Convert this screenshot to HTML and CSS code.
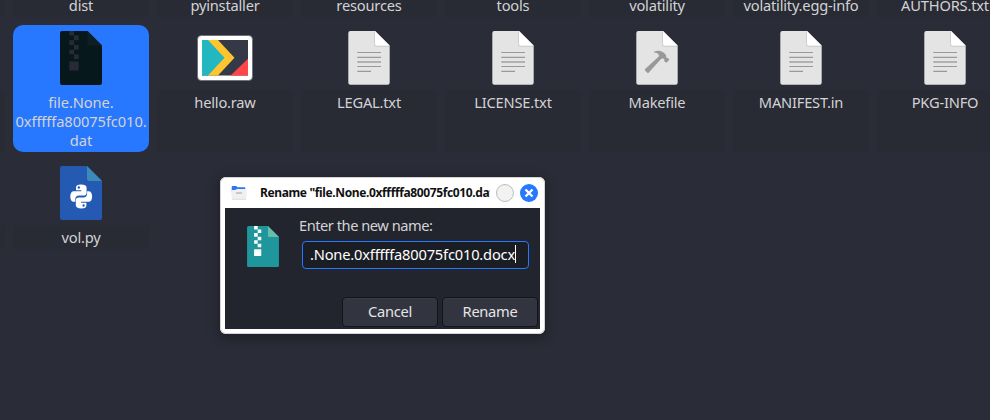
FILE: index.html
```html
<!DOCTYPE html>
<html lang="en">
<head>
<meta charset="utf-8">
<title>File Manager</title>
<link rel="stylesheet" href="styles.css">
</head>
<body>
<svg class="defs" aria-hidden="true">
  <symbol id="page" viewBox="0 0 44 56">
    <path d="M3 1.3h25L42.8 16v37a2 2 0 0 1-2 2H3a2 2 0 0 1-2-2V3.3a2 2 0 0 1 2-2z" fill="#1b1d24" opacity=".5"/>
    <path d="M3.3 1H28L42.7 15.6v37.1a2 2 0 0 1-2 2H3.3a2 2 0 0 1-2-2V3a2 2 0 0 1 2-2z" fill="#e4e4e4"/>
    <path d="M27.500 2v12.500a2 2 0 0 0 2 2H42" fill="none" stroke="#cfcfcf"/>
    <path d="M28 1l14.500 14.500H30a2 2 0 0 1-2-2z" fill="#fff"/>
  </symbol>
  <symbol id="text" viewBox="0 0 44 56">
    <use href="#page" width="44" height="56"/>
    <path d="M10.300 22.500h23.700M10.300 27.400h23.700M10.300 36.500h23.700M10.300 41.300h13.700" stroke="#999" stroke-width="1.200"/>
    <path d="M10.300 32h23.700" stroke="#b2b2b2" stroke-width="2"/>
  </symbol>
  <symbol id="make" viewBox="0 0 44 56">
    <use href="#page" width="44" height="56"/>
    <path d="M19 21.800c3.500-1.800 8-1.300 11 2 1.200 1.400 1.400 3 1.400 4.200l1.300-.3 1.600 2-2.800 3.100-2.300-1.500.1-2-1.500-1-2 1-12.200 13.400q-.6.6-1.300 0l-2.300-2.200q-.5-.8.1-1.400L23.800 26.600q.6-1.800-.8-2.900-1.300-1-4-1.100z" fill="#999"/>
  </symbol>
  <symbol id="zip" viewBox="0 0 42 54">
    <path class="zip-body" d="M2 0h25.500L42 14.500V52a2 2 0 0 1-2 2H2a2 2 0 0 1-2-2V2a2 2 0 0 1 2-2z"/>
    <path class="zip-fold" d="M27.500 0L42 14.500H29.500a2 2 0 0 1-2-2z"/>
    <path class="zip-teeth" d="M9.300 0h4.700v4.600H9.300zM14 4.600h4.700v4.700H14zM9.300 9.300h4.700v4.700H9.300zM14 14h4.700v4.700H14zM9.300 18.700h4.700v4.600H9.300zM14 23.300h4.700v4.700H14zM9.300 30.500h9.400v9H9.300z"/>
  </symbol>
</svg>

<main class="desktop">
  <section class="files">
    <div class="file"><div class="label"></div></div>
    <div class="file"><div class="label">dist</div></div>
    <div class="file"><div class="label">pyinstaller</div></div>
    <div class="file"><div class="label">resources</div></div>
    <div class="file"><div class="label">tools</div></div>
    <div class="file"><div class="label">volatility</div></div>
    <div class="file"><div class="label">volatility.egg-info</div></div>
    <div class="file"><div class="label">AUTHORS.txt</div></div>

    <div class="file"><div class="icon"></div><div class="label"></div></div>
    <div class="file selected"><div class="icon"><svg class="dark" width="42" height="54"><use href="#zip"/></svg></div><div class="label">file.None.<br>0xfffffa80075fc010.<br>dat</div></div>
    <div class="file"><div class="icon">
      <svg width="56" height="48" viewBox="0 0 56 48">
        <rect x=".5" y="1.500" width="55" height="45" rx="4" fill="#fff" stroke="#666873" stroke-width=".8"/>
        <path d="M5 6h46v35.500H5z" fill="#343847"/>
        <path d="M11 6h10l16.500 17.800L21 41.500H11z" fill="#fec52e"/>
        <path d="M5 6h6l16.500 17.800L11 41.500H5z" fill="#23b7c2"/>
        <path d="M51 24.800v16.700H33.500z" fill="#ff4545"/>
      </svg></div><div class="label">hello.raw</div></div>
    <div class="file"><div class="icon"><svg width="44" height="56"><use href="#text"/></svg></div><div class="label">LEGAL.txt</div></div>
    <div class="file"><div class="icon"><svg width="44" height="56"><use href="#text"/></svg></div><div class="label">LICENSE.txt</div></div>
    <div class="file"><div class="icon"><svg width="44" height="56"><use href="#make"/></svg></div><div class="label">Makefile</div></div>
    <div class="file"><div class="icon"><svg width="44" height="56"><use href="#text"/></svg></div><div class="label">MANIFEST.in</div></div>
    <div class="file"><div class="icon"><svg width="44" height="56"><use href="#text"/></svg></div><div class="label">PKG-INFO</div></div>

    <div class="file"><div class="icon"></div><div class="label"></div></div>
    <div class="file"><div class="icon">
      <svg width="42" height="54" viewBox="0 0 42 54">
        <path d="M2 0h25L42 15v37a2 2 0 0 1-2 2H2a2 2 0 0 1-2-2V2a2 2 0 0 1 2-2z" fill="#255ab2"/>
        <path d="M27 0l15 15H29a2 2 0 0 1-2-2z" fill="#3b8ab8"/>
        <g fill="#fff">
          <path id="snake" d="M21 18.500c-3.500 0-5 1-5 3.200v2.600h5.300v.9h-7.500c-2.200 0-3.500 2-3.500 5.300s1.300 5.300 3.500 5.300h1.500V33c0-2 1.500-3.400 3.500-3.400h5c1.700 0 2.800-1.300 2.800-2.900v-5c0-2-1.800-3.200-5.600-3.200zm-2.200 1.800a1.200 1.200 0 1 1 0 2.400 1.200 1.200 0 0 1 0-2.400z"/>
          <use href="#snake" transform="rotate(180 21.200 30.500)"/>
        </g>
      </svg></div><div class="label">vol.py</div></div>
  </section>

  <div class="dialog" role="dialog">
    <header class="titlebar">
      <svg width="16" height="14" viewBox="0 0 16 14">
        <path d="M.7 1q0-1 1-1h3.600l1 1.300h7q1 0 1 1V6H.7z" fill="#2e75ee"/>
        <path d="M.3 5Q0 4 1 4h3.500l1-1H15q1 0 .8 1l-.5 8.500q0 .9-1 .9H1.500q-.9 0-.9-.9z" fill="#f0f0f3"/>
        <path d="M1 13.300h14" stroke="#d5d5d8" stroke-width=".7"/>
        <path d="M5 7h6" stroke="#bfc0c4" stroke-width="1.600"/>
      </svg>
      <span class="title">Rename "file.None.0xfffffa80075fc010.dat"</span>
      <span class="max"></span>
      <svg class="close" width="18" height="18" viewBox="0 0 18 18"><circle cx="9" cy="9" r="9" fill="#2777ff"/><path d="M5.500 5.500l7 7M12.500 5.500l-7 7" stroke="#fff" stroke-width="2.300"/></svg>
    </header>
    <div class="content">
      <div class="form">
        <svg width="32" height="41"><use href="#zip"/></svg>
        <div class="fields">
          <div class="prompt">Enter the new name:</div>
          <div class="entry"><span>.None.0xfffffa80075fc010.docx</span><i class="caret"></i></div>
        </div>
      </div>
      <div class="actions"><button>Cancel</button><button>Rename</button></div>
    </div>
  </div>
</main>
</body>
</html>
```
FILE: styles.css
```css
* { box-sizing: border-box; }
body { margin: 0; background: #2a2c37; }
.defs { position: absolute; width: 0; height: 0; }
.desktop {
  position: relative;
  width: 990px;
  height: 420px;
  overflow: hidden;
  background: #2a2c37;
  color: #d3d3d5;
  font: 14.67px/19px "Noto Sans", sans-serif;
}
.files {
  display: grid;
  grid-template-columns: repeat(8, 136px);
  grid-template-rows: 21px 127px 89px;
  gap: 8px;
  margin: -4px 0 0 -131px;
}
.file { display: flex; flex-direction: column; text-align: center; }
.icon {
  display: flex;
  flex: 0 0 65px;
  align-items: center;
  justify-content: center;
  padding-top: 1px;
}
.icon svg { display: block; }
.label {
  flex: 1;
  padding-top: 3px;
  background: #282a34;
  letter-spacing: -.2px;
  white-space: nowrap;
}
.file:nth-child(-n+8) .label { padding-top: 0; }
.selected { background: #2777ff; border-radius: 10px; }
.selected .label { background: none; letter-spacing: -.08px; }
.dark { --body: #06181c; --fold: #0d1f22; --teeth: #282a37; }
.zip-body { fill: var(--body, #1f969b); }
.zip-fold { fill: var(--fold, #65bdaa); }
.zip-teeth { fill: var(--teeth, #fff); }

.dialog {
  position: absolute;
  left: 220px;
  top: 177px;
  width: 325px;
  height: 157px;
  padding: 0 5px 5px;
  display: flex;
  flex-direction: column;
  border-radius: 6px;
  background: #fff;
  box-shadow: inset 0 0 0 1px #d4d4d6, 0 3px 12px 2px rgba(0, 0, 0, .28);
}
.titlebar {
  display: flex;
  flex: 0 0 31px;
  align-items: center;
  padding: 0 2px 0 6px;
}
.title {
  flex: 0 0 230px;
  margin: 0 6px 0 13px;
  overflow: hidden;
  white-space: nowrap;
  color: #111;
  font-size: 12px;
  font-weight: 700;
  letter-spacing: -.37px;
}
.max {
  width: 18px;
  height: 18px;
  margin-right: 6px;
  border: 1px solid #bcbcbc;
  border-radius: 50%;
  background: #f2f2f2;
}
.content { flex: 1; display: flex; flex-direction: column; justify-content: space-between; background: #23252e; }
.form { display: flex; align-items: flex-start; padding: 8px 11px 0 22px; }
.form svg { margin-top: 10px; flex: none; }
.fields { flex: 1; margin-left: 20px; }
.prompt { height: 20px; letter-spacing: -.48px; }
.entry {
  display: flex;
  align-items: center;
  height: 28px;
  margin: 5px 0 0 3px;
  padding: 0 0 2px 7px;
  border: 1px solid #2777ff;
  border-radius: 4px;
  background: #1b1d25;
  color: #fff;
  letter-spacing: -.19px;
  white-space: nowrap;
}
.caret { width: 1px; height: 18px; background: #fff; }
.actions { display: flex; justify-content: flex-end; gap: 4px; padding: 0 2px 2px; }
button {
  width: 96px;
  height: 30px;
  padding: 0 0 2px;
  border: 1px solid #12141b;
  border-radius: 4px;
  background: #323440;
  color: #e4e4e6;
  font: inherit;
  letter-spacing: -.3px;
  box-shadow: inset 0 1px #393b47;
}
```
